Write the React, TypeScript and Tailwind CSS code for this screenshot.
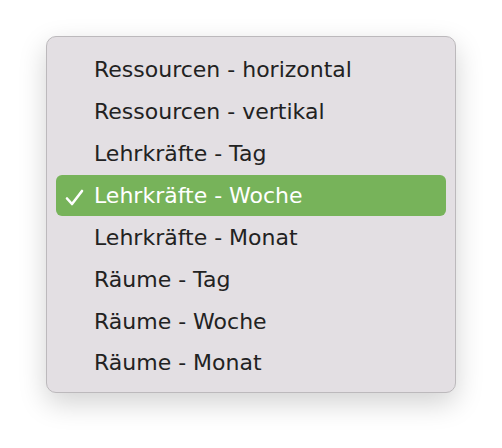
const items = [
  "Ressourcen - horizontal",
  "Ressourcen - vertikal",
  "Lehrkräfte - Tag",
  "Lehrkräfte - Woche",
  "Lehrkräfte - Monat",
  "Räume - Tag",
  "Räume - Woche",
  "Räume - Monat",
];

const selected = "Lehrkräfte - Woche";

export default function App() {
  return (
    <div className="w-[502px] h-[448px] bg-white pl-[46px] pt-[36px] font-['DejaVu_Sans',sans-serif]">
      <div className="w-[410px] h-[357px] rounded-[10px] border border-[#bcb9bc] bg-[#e3dfe3] px-[9px] pt-[12px] shadow-[0_10px_28px_rgba(0,0,0,0.18)]">
        {items.map((item) => {
          const active = item === selected;
          return (
            <div
              key={item}
              className={
                active
                  ? "relative flex h-[41.86px] items-center rounded-[6px] bg-[#77b35a] pl-[38px] text-[22px] text-white"
                  : "relative flex h-[41.86px] items-center pl-[38px] text-[22px] text-[#222222]"
              }
            >
              {active && (
                <svg
                  className="absolute left-[9px] top-[14px]"
                  width="19"
                  height="17"
                  viewBox="0 0 19 17"
                  fill="none"
                >
                  <path
                    d="M2 9.5 L7 15 L17 2"
                    stroke="white"
                    strokeWidth="2.6"
                    strokeLinecap="round"
                    strokeLinejoin="round"
                  />
                </svg>
              )}
              {item}
            </div>
          );
        })}
      </div>
    </div>
  );
}
